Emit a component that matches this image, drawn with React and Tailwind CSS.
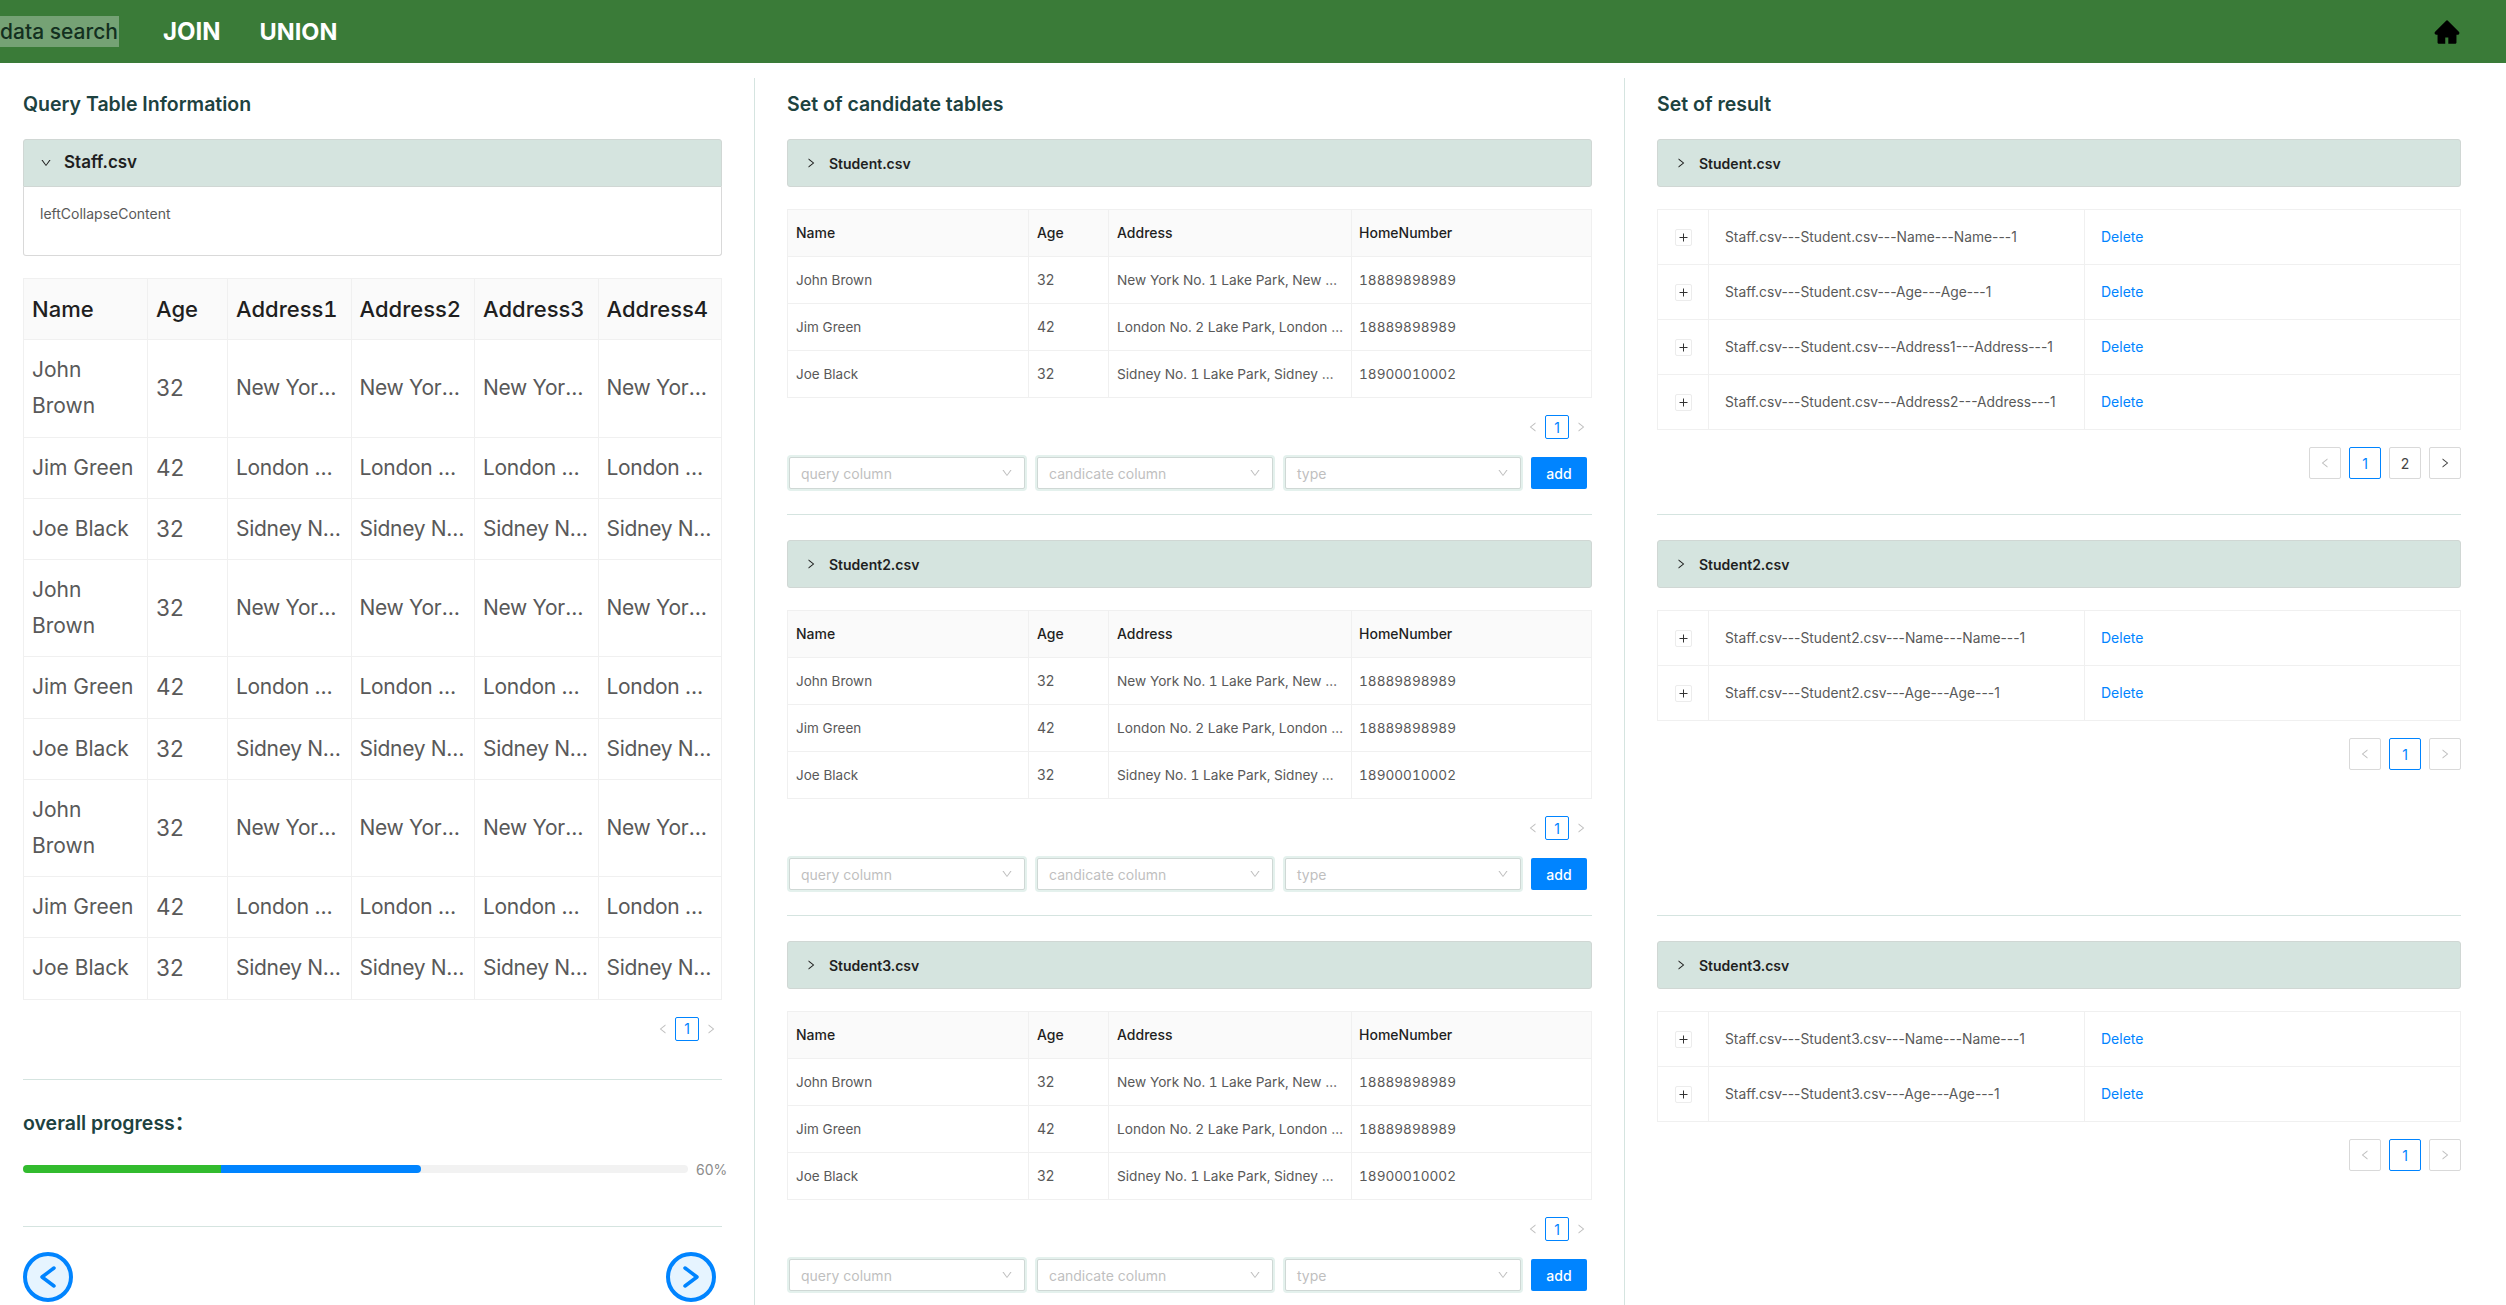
import React from 'react'
import { AiFillHome, AiOutlineDown, AiOutlineLeft, AiOutlineRight } from 'react-icons/ai'

const bigRows = [
  ['John Brown', '32', 'New York No. 1 Lake Park, New York No. 1 Lake Park'],
  ['Jim Green', '42', 'London No. 2 Lake Park, London No. 2 Lake Park'],
  ['Joe Black', '32', 'Sidney No. 1 Lake Park, Sidney No. 1 Lake Park'],
]
const candidateRows = [
  ['John Brown', '32', 'New York No. 1 Lake Park, New York No. 1 Lake Park', '18889898989'],
  ['Jim Green', '42', 'London No. 2 Lake Park, London No. 2 Lake Park', '18889898989'],
  ['Joe Black', '32', 'Sidney No. 1 Lake Park, Sidney No. 1 Lake Park', '18900010002'],
]
const results = [
  {
    file: 'Student.csv',
    pages: 2,
    rows: [
      'Staff.csv---Student.csv---Name---Name---1',
      'Staff.csv---Student.csv---Age---Age---1',
      'Staff.csv---Student.csv---Address1---Address---1',
      'Staff.csv---Student.csv---Address2---Address---1',
    ],
  },
  {
    file: 'Student2.csv',
    pages: 1,
    rows: ['Staff.csv---Student2.csv---Name---Name---1', 'Staff.csv---Student2.csv---Age---Age---1'],
  },
  {
    file: 'Student3.csv',
    pages: 1,
    rows: ['Staff.csv---Student3.csv---Name---Name---1', 'Staff.csv---Student3.csv---Age---Age---1'],
  },
]

const Title = ({ children }) => (
  <h2 className="h-[30px] text-[19.5px] leading-[30px] font-semibold text-[#1d4240]">{children}</h2>
)

const CollapseHead = ({ name, open = false }) => (
  <div className={`flex h-[48px] items-center bg-[#d5e4df] border border-[#d0d7d4] ${open ? 'rounded-t-[3px] pl-[16px]' : 'rounded-[3px] pl-[17px]'} text-[#1f1f1f]`}>
    {open ? <AiOutlineDown className="text-[12px]" /> : <AiOutlineRight className="text-[12px]" />}
    <span className={`${open ? 'ml-[12px] text-[17px]' : 'ml-[12px] text-[14px]'} font-semibold`}>{name}</span>
  </div>
)

const SmallPager = () => (
  <div className="flex items-center justify-end">
    <AiOutlineLeft className="text-[12px] text-[#bfbfbf]" />
    <span className="mx-[6px] flex h-[24px] w-[24px] items-center justify-center rounded-[2px] border border-[#0084ff] text-[14px] text-[#0084ff]">1</span>
    <AiOutlineRight className="text-[12px] text-[#bfbfbf] mr-[5px]" />
  </div>
)

const PagerBox = ({ children, active, muted }) => (
  <span className={`flex h-[32px] w-[32px] items-center justify-center rounded-[2px] border text-[14px] ${active ? 'border-[#0084ff] text-[#0084ff]' : 'border-[#d9d9d9] text-[#444444]'} ${muted ? 'text-[#bfbfbf]' : ''}`}>
    {children}
  </span>
)

const Select = ({ label }) => (
  <div className="flex h-[32px] w-[236px] items-center justify-between rounded-[2px] border border-[#cfd8d5] bg-white px-[11px] text-[14px] text-[#bfbfbf] shadow-[0_0_0_2px_#e4f1ed]">
    <span>{label}</span>
    <AiOutlineDown className="text-[12px]" />
  </div>
)

const Divider = ({ className = '' }) => <div className={`h-px bg-[#d5e4e0] ${className}`} />

const QueryTable = () => (
  <table className="w-full table-fixed border-collapse text-[21px] leading-[36.2px] text-[#595959]">
    <thead>
      <tr className="bg-[#fafafa] text-[22px] text-[#1f1f1f]">
        {['Name', 'Age', 'Address1', 'Address2', 'Address3', 'Address4'].map((h, i) => (
          <th key={h} className={`border border-[#f0f0f0] px-[8px] py-[12px] text-left font-medium tabular-nums ${i === 0 ? 'w-[124px]' : i === 1 ? 'w-[80px]' : ''}`}>{h}</th>
        ))}
      </tr>
    </thead>
    <tbody>
      {[0, 1, 2].flatMap((s) =>
        bigRows.map((r, i) => (
          <tr key={`${s}-${i}`}>
            <td className="border border-[#f0f0f0] px-[8px] py-[12px]">{r[0]}</td>
            <td className="border border-[#f0f0f0] px-[8px] py-[12px] text-[22.5px]">{r[1]}</td>
            {[0, 1, 2, 3].map((c) => (
              <td key={c} className="truncate border border-[#f0f0f0] px-[8px] py-[12px] tracking-[-0.3px]">{r[2]}</td>
            ))}
          </tr>
        ))
      )}
    </tbody>
  </table>
)

const CandidateSection = ({ file }) => (
  <div className="h-[401px]">
    <CollapseHead name={file} />
    <table className="mt-[22px] w-full table-fixed border-collapse text-[14px] leading-[22px] text-[#595959]">
      <thead>
        <tr className="bg-[#fafafa] text-[#1f1f1f]">
          <th className="w-[241px] border border-[#f0f0f0] px-[8px] py-[12px] text-left font-medium">Name</th>
          <th className="w-[80px] border border-[#f0f0f0] px-[8px] py-[12px] text-left font-medium">Age</th>
          <th className="w-[243px] border border-[#f0f0f0] px-[8px] py-[12px] text-left font-medium">Address</th>
          <th className="border border-[#f0f0f0] px-[7px] py-[12px] text-left font-medium">HomeNumber</th>
        </tr>
      </thead>
      <tbody>
        {candidateRows.map((r) => (
          <tr key={r[0]}>
            <td className="border border-[#f0f0f0] px-[8px] py-[12px] text-[13.5px]">{r[0]}</td>
            <td className="border border-[#f0f0f0] px-[8px] py-[12px]">{r[1]}</td>
            <td className="truncate border border-[#f0f0f0] px-[8px] py-[12px] text-[13.7px] tabular-nums">{r[2]}</td>
            <td className="border border-[#f0f0f0] px-[7px] py-[12px] text-[13.6px] tabular-nums">{r[3]}</td>
          </tr>
        ))}
      </tbody>
    </table>
    <div className="mt-[17px]">
      <SmallPager />
    </div>
    <div className="mt-[18px] flex items-center pl-[2px]">
      <Select label="query column" />
      <div className="ml-[12px]"><Select label="candicate column" /></div>
      <div className="ml-[12px]"><Select label="type" /></div>
      <button className="ml-[10px] h-[32px] w-[56px] rounded-[2px] bg-[#0084ff] text-[14px] font-medium text-white">add</button>
    </div>
    <Divider className="mt-[25px]" />
  </div>
)

const ResultSection = ({ file, rows, pages }) => (
  <div className="h-[401px]">
    <CollapseHead name={file} />
    <table className="mt-[22px] w-full table-fixed border-collapse text-[14px] leading-[22px] text-[#595959]">
      <tbody>
        {rows.map((r) => (
          <tr key={r}>
            <td className="w-[51px] border border-[#f0f0f0] py-[16px] pl-[17px]">
              <span className="flex h-[17px] w-[17px] items-center justify-center rounded-[2px] border border-[#ececec]">
                <svg width="9" height="9" viewBox="0 0 9 9"><path d="M4.5 0.5v8M0.5 4.5h8" stroke="#333333" strokeWidth="1" /></svg>
              </span>
            </td>
            <td className="w-[376px] border border-[#f0f0f0] px-[16px] py-[16px] text-[13.8px]">{r}</td>
            <td className="border border-[#f0f0f0] px-[16px] py-[16px] text-[#0084ff]">Delete</td>
          </tr>
        ))}
      </tbody>
    </table>
    <div className="mt-[17px] flex justify-end gap-[8px]">
      <PagerBox muted><AiOutlineLeft className="text-[12px]" /></PagerBox>
      <PagerBox active>1</PagerBox>
      {pages > 1 && <PagerBox>2</PagerBox>}
      <PagerBox muted={pages === 1}><AiOutlineRight className="text-[12px]" /></PagerBox>
    </div>
  </div>
)

const RoundButton = ({ dir }) => (
  <button className="flex h-[50px] w-[50px] items-center justify-center rounded-full border-[4px] border-[#0084ff] bg-[#e6f4ff] text-[#0084ff]">
    <svg width="18" height="24" viewBox="0 0 18 24" fill="none" stroke="currentColor" strokeWidth="3.5" strokeLinecap="round" strokeLinejoin="round">
      <path d={dir === 'left' ? 'M15 3 3 12l12 9' : 'M3 3l12 9-12 9'} />
    </svg>
  </button>
)

export default function App() {
  return (
    <div className="h-[1305px] overflow-hidden bg-white font-['Inter','Noto_Sans_CJK_SC',sans-serif]">
      <nav className="flex h-[63px] items-center bg-[#3a7b38]">
        <span className="flex h-[31px] w-[119px] items-center whitespace-nowrap bg-[#75a275] text-[21px] font-medium text-[#13301f]">data search</span>
        <span className="ml-[44px] text-[24px] font-bold text-white">JOIN</span>
        <span className="ml-[39px] text-[23.5px] font-bold text-white">UNION</span>
        <AiFillHome className="ml-auto mr-[45px] text-[28px] text-black" />
      </nav>

      <div className="mt-[15px] flex items-stretch">
        <section className="w-[755px] shrink-0 border-r border-[#d5e4e0] pl-[23px] pr-[32px] pt-[11px]">
          <Title>Query Table Information</Title>
          <div className="mt-[20px]">
            <CollapseHead name="Staff.csv" open />
            <div className="h-[69px] rounded-b-[3px] border border-t-0 border-[#d9d9d9] px-[16px] pt-[16px] text-[14px] leading-[22px] text-[#595959]">leftCollapseContent</div>
          </div>
          <div className="mt-[22px]">
            <QueryTable />
          </div>
          <div className="mt-[17px]">
            <SmallPager />
          </div>
          <Divider className="mt-[38px]" />
          <p className="mt-[28px] text-[19.5px] leading-[30px] font-semibold text-[#1d4240]">overall progress：</p>
          <div className="mt-[21px] flex items-center">
            <div className="flex h-[8px] w-[665px] shrink-0 overflow-hidden rounded-full bg-[#f2f2f2]">
              <div className="h-full w-[198px] bg-[#32bb2e]" />
              <div className="h-full w-[200px] rounded-r-full bg-[#0084ff]" />
            </div>
            <span className="ml-[8px] whitespace-nowrap text-[14px] text-[#8c8c8c]">60%</span>
          </div>
          <Divider className="mt-[46px]" />
          <div className="mt-[25px] flex justify-between pr-[6px]">
            <RoundButton dir="left" />
            <RoundButton dir="right" />
          </div>
        </section>

        <section className="w-[870px] shrink-0 border-r border-[#d5e4e0] px-[32px] pt-[11px]">
          <Title>Set of candidate tables</Title>
          <div className="mt-[20px]">
            {['Student.csv', 'Student2.csv', 'Student3.csv'].map((f) => (
              <CandidateSection key={f} file={f} />
            ))}
          </div>
        </section>

        <section className="min-w-0 flex-1 pl-[32px] pr-[45px] pt-[11px]">
          <Title>Set of result</Title>
          <div className="mt-[20px]">
            {results.map((r, i) => (
              <div key={r.file} className="relative">
                <ResultSection {...r} />
                {i < 2 && <Divider className="absolute bottom-[25px] left-0 right-0" />}
              </div>
            ))}
          </div>
        </section>
      </div>
    </div>
  )
}
